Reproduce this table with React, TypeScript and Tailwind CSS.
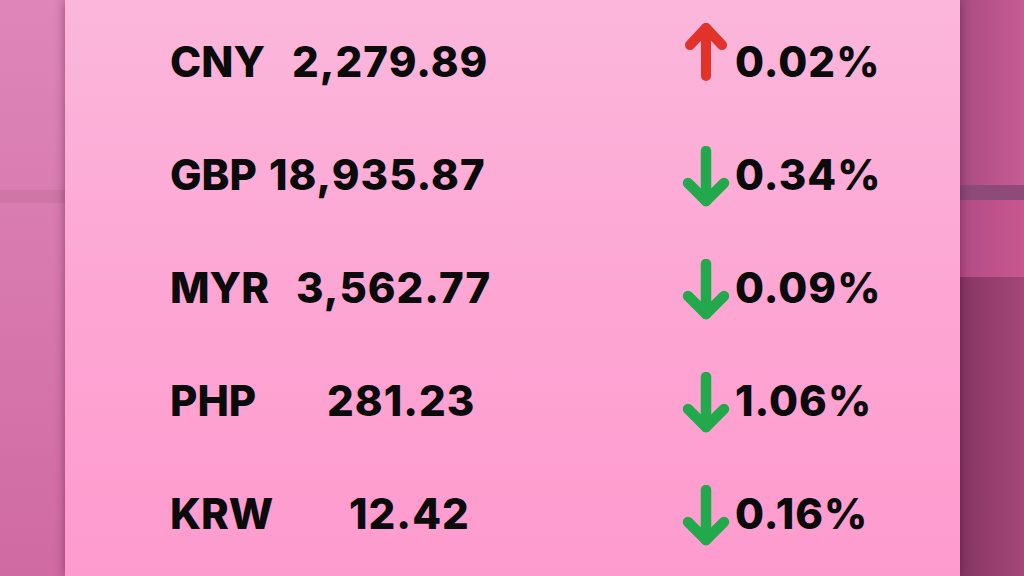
const RATES = [
  { code: "CNY", value: "2,279.89", change: "0.02%", up: true, offset: "pl-[24px]" },
  { code: "GBP", value: "18,935.87", change: "0.34%", up: false, offset: "pl-[1px]" },
  { code: "MYR", value: "3,562.77", change: "0.09%", up: false, offset: "pl-[28px]" },
  { code: "PHP", value: "281.23", change: "1.06%", up: false, offset: "pl-[59px]" },
  { code: "KRW", value: "12.42", change: "0.16%", up: false, offset: "pl-[81px]" },
];

function Arrow({ up }: { up: boolean }) {
  if (up) {
    return (
      <svg width="50" height="60" viewBox="0 0 50 60" fill="none" stroke="#e2332b" strokeWidth="10" strokeLinecap="round" strokeLinejoin="round">
        <path d="M25 55V7" />
        <path d="M9 24L25 7L41 24" />
      </svg>
    );
  }
  return (
    <svg width="50" height="62" viewBox="0 0 50 62" fill="none" stroke="#22a94c" strokeWidth="10.5" strokeLinecap="round" strokeLinejoin="round">
      <path d="M25 5V55" />
      <path d="M7 37L25 55L43 37" />
    </svg>
  );
}

export default function App() {
  return (
    <div className="flex h-[576px] w-[1024px] overflow-hidden" style={{ fontFamily: "Inter, 'Liberation Sans', sans-serif" }}>
      {/* left backdrop */}
      <div className="flex w-[65px] flex-col bg-gradient-to-b from-[#de86b9] to-[#d06aa3]">
        <div className="h-[190px]" />
        <div className="h-[13px] bg-[#c9739f]/70" />
      </div>

      {/* card */}
      <div className="relative z-10 flex-1 bg-gradient-to-b from-[#fbb7db] via-[#fda6d4] to-[#fe9bce] pt-[5px] pl-[105px] shadow-[0_0_10px_rgba(60,0,40,0.45)]">
        {RATES.map(r => (
          <div key={r.code} className="grid h-[113px] grid-cols-[98px_250px_159px_58px_auto] items-center text-[42px] font-extrabold leading-none text-[#0b0b0b]">
            <span>{r.code}</span>
            <span className={`${r.offset} tracking-[1px]`}>{r.value}</span>
            <span />
            <span className={r.up ? "mb-[22px] flex justify-center" : "mt-[4px] flex justify-center"}>
              <Arrow up={r.up} />
            </span>
            <span className="tracking-[1px]">{r.change}</span>
          </div>
        ))}
      </div>

      {/* right backdrop */}
      <div className="flex w-[64px] flex-col">
        <div className="h-[185px] bg-gradient-to-r from-[#a94c82] to-[#c75c94]" />
        <div className="h-[15px] bg-[#8d4a7b]" />
        <div className="h-[77px] bg-gradient-to-r from-[#b24c86] to-[#c9578f]" />
        <div className="flex-1 bg-gradient-to-r from-[#863663] to-[#a34778]" />
      </div>
    </div>
  );
}
